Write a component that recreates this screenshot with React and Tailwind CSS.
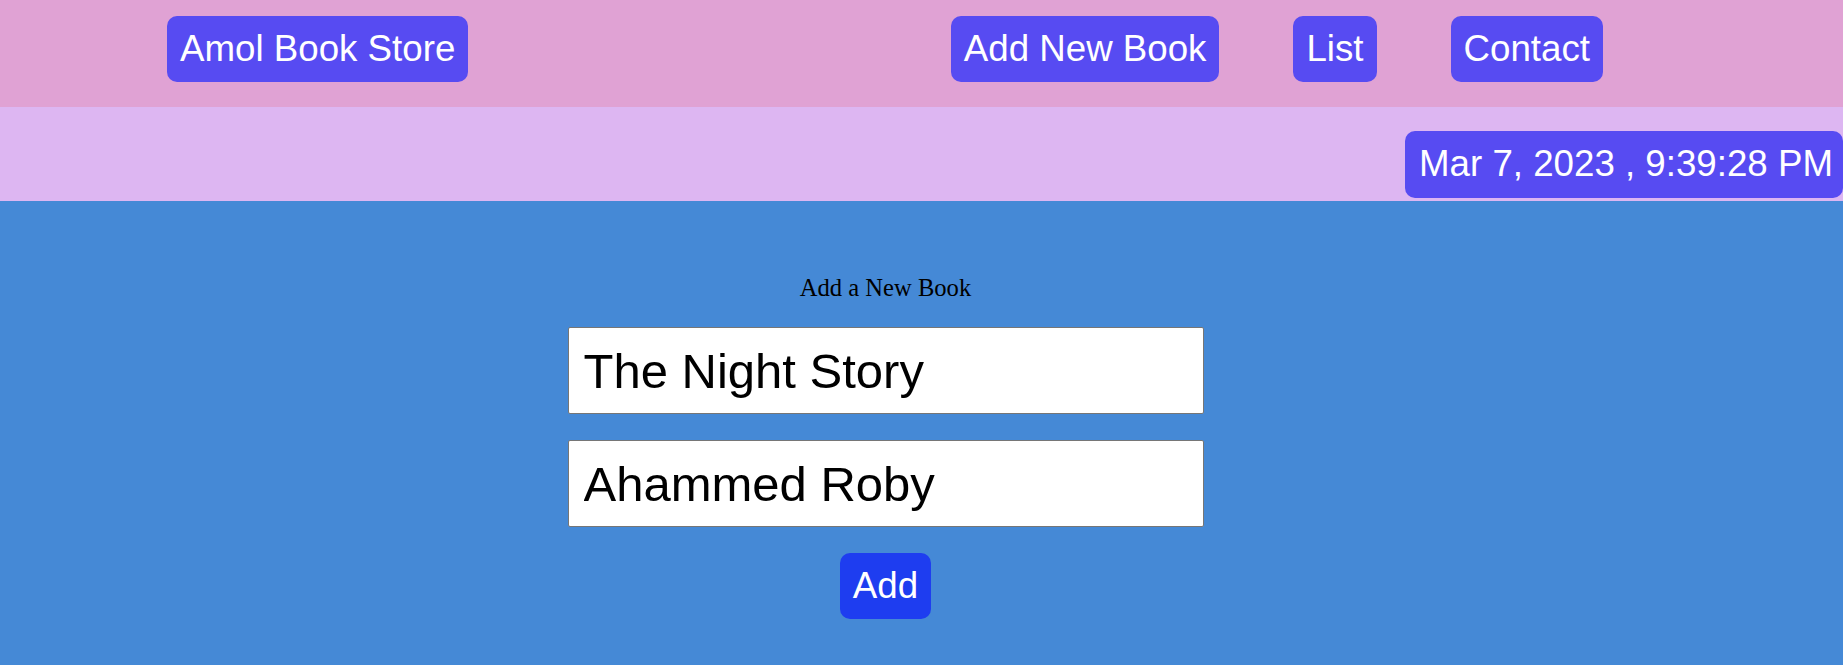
import React, { useState } from "react";

const sans = "font-['Liberation_Sans',Arial,sans-serif]";

export default function App() {
  const [title, setTitle] = useState("The Night Story");
  const [author, setAuthor] = useState("Ahammed Roby");

  const navItems = ["Add New Book", "List", "Contact"];

  return (
    <div className={`min-h-screen w-full bg-[#4589d6] ${sans}`}>
      {/* Top nav */}
      <header className="h-[107px] bg-[#e0a2d4] flex items-start justify-between pl-[167px] pr-[240px] pt-[16px]">
        <a className="h-[66px] px-[13px] flex items-center rounded-[10px] bg-[#574bf2] text-white text-[36.7px] leading-none">
          Amol Book Store
        </a>
        <nav className="flex items-center gap-[74px]">
          {navItems.map((item) => (
            <a
              key={item}
              className="h-[66px] px-[13px] flex items-center rounded-[10px] bg-[#574bf2] text-white text-[36.7px] leading-none"
            >
              {item}
            </a>
          ))}
        </nav>
      </header>

      {/* Date bar */}
      <div className="h-[94px] bg-[#ddb6f2] flex justify-end items-start pt-[24px]">
        <div className="h-[67px] pl-[14px] pr-[10px] flex items-center rounded-[10px] bg-[#574bf2] text-white text-[36.7px] leading-none whitespace-nowrap">
          Mar 7, 2023 , 9:39:28 PM
        </div>
      </div>

      {/* Form */}
      <main className="flex flex-col items-center pr-[72px] pt-[73px] pb-[40px]">
        <h3 className="font-['Liberation_Serif','Times_New_Roman',serif] text-[24.6px] leading-[27px] text-black">
          Add a New Book
        </h3>
        <input
          value={title}
          onChange={(e) => setTitle(e.target.value)}
          className="mt-[26px] w-[636px] h-[87px] px-[15px] bg-white border border-[#767676] rounded-[2px] text-[49px] text-black outline-none"
        />
        <input
          value={author}
          onChange={(e) => setAuthor(e.target.value)}
          className="mt-[26px] w-[636px] h-[87px] px-[15px] bg-white border border-[#767676] rounded-[2px] text-[49px] text-black outline-none"
        />
        <button className="mt-[26px] h-[66px] px-[13px] flex items-center rounded-[10px] bg-[#1e3df0] text-white text-[36.7px] leading-none">
          Add
        </button>
      </main>
    </div>
  );
}
